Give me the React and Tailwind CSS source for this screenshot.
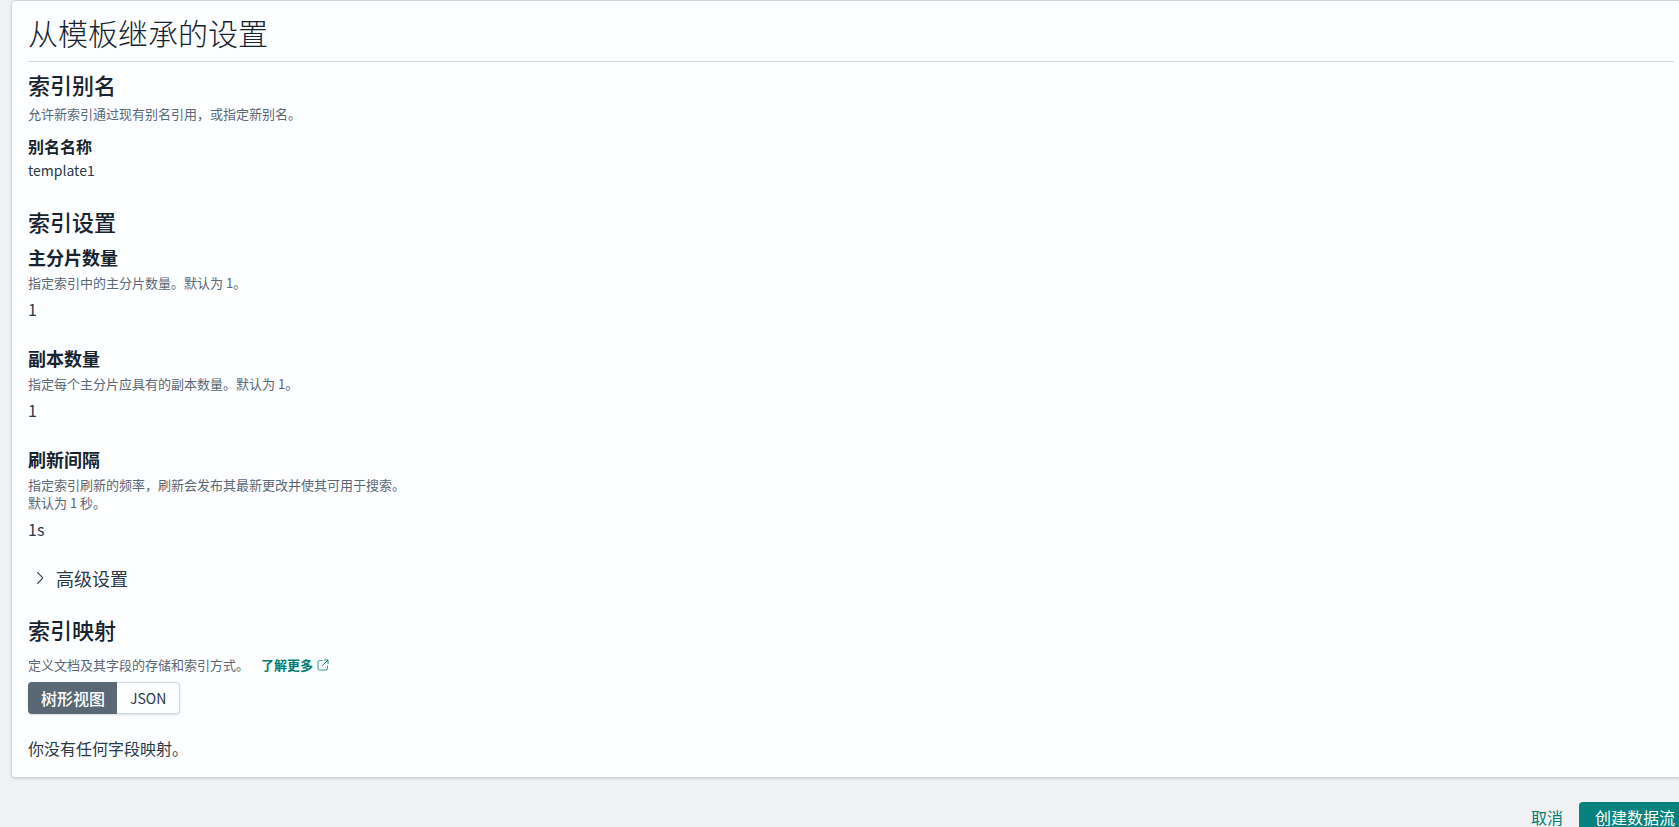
import React, { useState } from 'react';

const numericSettings = [
  {
    id: 'shards',
    title: '主分片数量',
    description: ['指定索引中的主分片数量。默认为 1。'],
    value: '1',
  },
  {
    id: 'replicas',
    title: '副本数量',
    description: ['指定每个主分片应具有的副本数量。默认为 1。'],
    value: '1',
  },
  {
    id: 'refresh',
    title: '刷新间隔',
    description: ['指定索引刷新的频率，刷新会发布其最新更改并使其可用于搜索。', '默认为 1 秒。'],
    value: '1s',
  },
];

const SectionTitle = ({ children }) => (
  <h2 className="text-[22px] leading-8 font-medium text-[#172430]">{children}</h2>
);

const ArrowRight = () => (
  <svg width="16" height="16" viewBox="0 0 16 16" fill="currentColor" aria-hidden="true">
    <path d="M5.157 13.069l4.611-4.685a.546.546 0 000-.768L5.158 2.93a.552.552 0 010-.771.53.53 0 01.759 0l4.61 4.684a1.65 1.65 0 010 2.312l-4.61 4.684a.53.53 0 01-.76 0 .552.552 0 010-.771z" />
  </svg>
);

const PopoutIcon = () => (
  <svg width="12" height="12" viewBox="0 0 12 12" fill="none" stroke="currentColor" strokeLinecap="round" strokeLinejoin="round" aria-hidden="true">
    <path d="M5 1.500H2.500A1.500 1.500 0 001 3v6.500A1.500 1.500 0 002.500 11H9a1.500 1.500 0 001.500-1.500V7" strokeWidth="0.8" />
    <path d="M7.500 1H11V4.500M10.800 1.200L5.500 6.500" strokeWidth="0.9" />
  </svg>
);

const App = () => {
  const [view, setView] = useState('tree');
  const activeView = 'border-[#5a6875] bg-[#5a6875] font-medium text-white';
  const idleView = 'border-[#d3d6dc]';

  return (
    <div className="h-screen overflow-hidden bg-[#f0f1f3] pl-[11px] font-['Noto_Sans_CJK_SC',sans-serif] text-base text-[#2a3947]">
      {/* The page runs a little past the right edge of the window */}
      <div className="-mr-3">
        <main className="rounded border border-[#d3d6dc] bg-[#fdfeff] px-4 pt-2 pb-[17px] shadow-sm">
          <h1 className="border-b border-[#d3d6dc] pb-1.5 text-[30px] leading-[46px] font-light text-[#172430]">
            从模板继承的设置
          </h1>

          <section className="pt-1.5">
            <SectionTitle>索引别名</SectionTitle>
            <p className="pt-[5px] text-[13px] leading-[18px] text-[#5a6875]">
              允许新索引通过现有别名引用，或指定新别名。
            </p>
            <dl className="pt-[11px]">
              <dt className="leading-6 font-bold text-[#172430]">别名名称</dt>
              <dd className="text-sm leading-6">template1</dd>
            </dl>
          </section>

          <section className="pt-[23px]">
            <SectionTitle>索引设置</SectionTitle>
            <div className="flex flex-col gap-[23px] pt-1.5">
              {numericSettings.map((setting) => (
                <div key={setting.id}>
                  <h3 className="text-lg leading-7 font-bold text-[#172430]">{setting.title}</h3>
                  <p className="pt-[3px] text-[13px] leading-[18px] text-[#5a6875]">
                    {setting.description.map((line) => (
                      <span key={line} className="block">{line}</span>
                    ))}
                  </p>
                  <p className="pt-[5px] leading-6">{setting.value}</p>
                </div>
              ))}
            </div>
            <button type="button" className="mt-[25px] ml-1 flex items-center gap-2 text-lg leading-6">
              <ArrowRight />
              高级设置
            </button>
          </section>

          <section className="pt-[23px]">
            <SectionTitle>索引映射</SectionTitle>
            <p className="flex items-center pt-[11px] text-[13px] leading-[18px] text-[#5a6875]">
              定义文档及其字段的存储和索引方式。
              <a href="#mappings" className="ml-3 flex items-center gap-1 font-bold text-[#017d73]">
                了解更多
                <PopoutIcon />
              </a>
            </p>
            <div className="mt-2 flex h-8 w-fit rounded shadow-sm">
              <button
                type="button"
                aria-pressed={view === 'tree'}
                onClick={() => setView('tree')}
                className={`rounded-l border border-r-0 px-3 leading-6 ${view === 'tree' ? activeView : idleView}`}
              >
                树形视图
              </button>
              <button
                type="button"
                aria-pressed={view === 'json'}
                onClick={() => setView('json')}
                className={`rounded-r border border-l-0 px-[13px] text-sm ${view === 'json' ? activeView : idleView}`}
              >
                JSON
              </button>
            </div>
            <p className="pt-[22px] leading-6">你没有任何字段映射。</p>
          </section>
        </main>

        <footer className="flex items-center justify-end gap-4 pt-6">
          <button type="button" className="text-[#017d73]">取消</button>
          <button type="button" className="h-[30px] rounded bg-[#07827e] px-4 text-white">
            创建数据流
          </button>
        </footer>
      </div>
    </div>
  );
};

export default App;
